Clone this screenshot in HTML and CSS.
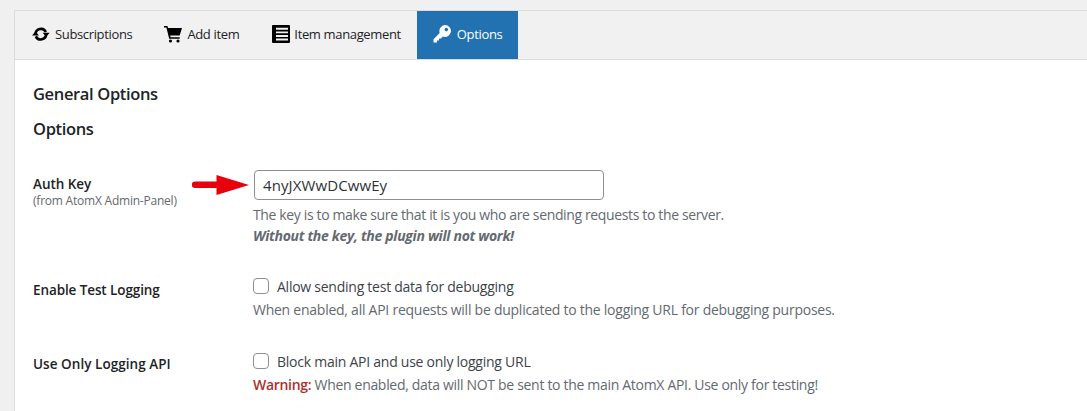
FILE: index.html

```html
<!DOCTYPE html>
<html lang="en">
<head>
    <meta charset="UTF-8">
    <title>Options</title>
    <link rel="stylesheet" href="styles.css">
</head>
<body>
    <div class="wrap">
        <nav class="tabs">
            <a class="tab tab-subs">
                <svg class="icon" width="18" height="16" viewBox="0 0.500 16.500 14.700"><path d="M3.200 8a5 5 0 0 1 9.500-2M13 8a5 5 0 0 1-9.500 2" fill="none" stroke="#000" stroke-width="2.400"/><path d="M9.800 6.800h6.400L13 10.400zM0 9.200h6.400L3.200 5.600z"/></svg>
                Subscriptions
            </a>
            <a class="tab tab-add">
                <svg class="icon" width="18" height="18" viewBox="0 0 18 18"><path d="M0 1h3.400l.7 2H18l-2.300 7.600H6.200l.4 1.600h9.100v1.600H5.200L2.400 2.600H0z"/><circle cx="6.500" cy="16" r="1.600"/><circle cx="14" cy="16" r="1.600"/></svg>
                Add item
            </a>
            <a class="tab tab-manage">
                <svg class="icon" width="18" height="18" viewBox="0 0 18 18"><path fill-rule="evenodd" d="M1 0h16a1 1 0 0 1 1 1v16a1 1 0 0 1-1 1H1a1 1 0 0 1-1-1V1a1 1 0 0 1 1-1zM4 2.800v1.900h12V2.800zM4 6.400v1.900h12V6.400zM4 10v1.900h12V10zM4 13.600v1.900h12v-1.900z"/></svg>
                Item management
            </a>
            <a class="tab tab-active">
                <svg class="icon" width="18" height="18" viewBox="0 0 18 18"><path fill-rule="evenodd" d="M12 0a6 6 0 1 1-2.200 11.600L8 13.500H6v2H4v2H0.500v-3.200l6.200-6.400A6 6 0 0 1 12 0zm1.300 2.800a1.800 1.800 0 1 0 0 3.600 1.800 1.800 0 0 0 0-3.600z"/></svg>
                Options
            </a>
        </nav>
        <div class="content">
            <h2 class="title-general">General Options</h2>
            <h2 class="title-options">Options</h2>

            <div class="row row-key">
                <div class="label">
                    <strong>Auth Key</strong>
                    <small>(from AtomX Admin-Panel)</small>
                    <svg class="arrow" width="58" height="24" viewBox="0 0 58 24"><path d="M3 8.500h21.500V2L57 12 24.500 22v-7H3a3.200 3.200 0 0 1 0-6.500z" fill="#e8000d"/></svg>
                </div>
                <div class="field">
                    <input class="key-input" type="text" value="4nyJXWwDCwwEy">
                    <p class="desc desc-first">The key is to make sure that it is you who are sending requests to the server.</p>
                    <p class="desc desc-em"><b><i>Without the key, the plugin will not work!</i></b></p>
                </div>
            </div>

            <div class="row row-test">
                <div class="label"><strong>Enable Test Logging</strong></div>
                <div class="field">
                    <label class="check"><span class="box"></span>Allow sending test data for debugging</label>
                    <p class="desc">When enabled, all API requests will be duplicated to the logging URL for debugging purposes.</p>
                </div>
            </div>

            <div class="row row-only">
                <div class="label"><strong>Use Only Logging API</strong></div>
                <div class="field">
                    <label class="check"><span class="box"></span>Block main API and use only logging URL</label>
                    <p class="desc desc-warn"><b class="warn">Warning:</b> When enabled, data will NOT be sent to the main AtomX API. Use only for testing!</p>
                </div>
            </div>
        </div>
    </div>
</body>
</html>
```

FILE: styles.css

```css
body {
    margin: 0;
    padding: 10px 0 0 14px;
    box-sizing: border-box;
    height: 411px;
    overflow: hidden;
    background-color: #f0f0f1;
    font-family: "Open Sans", "Noto Sans", sans-serif;
    font-size: 14px;
    letter-spacing: -0.25px;
    color: #3c434a;
}
.wrap {
    border: 1px solid #dcdcde;
    border-right: 0;
    border-bottom: 0;
    background-color: #fff;
    height: 401px;
}
.tabs {
    display: flex;
    height: 48px;
    padding-left: 1px;
    background-color: #f1f1f1;
    border-bottom: 1px solid #dcdcde;
}
.tab {
    display: flex;
    align-items: center;
    gap: 5px;
    height: 46px;
    padding: 0 16px 2px;
    font-size: 13px;
    letter-spacing: -0.35px;
    color: #1d2327;
}
.icon {
    flex: none;
    fill: #000;
}
.tab-manage {
    padding-left: 17px;
    gap: 4px;
}
.tab-active {
    box-sizing: border-box;
    height: 48px;
    gap: 6px;
    background-color: #2271b1;
    color: #fff;
}
.tab-active .icon {
    fill: #fff;
}
.content {
    padding: 0 18px;
}
h2 {
    margin: 0;
    font-size: 16.500px;
    font-weight: 600;
    letter-spacing: -0.35px;
    line-height: 22px;
    color: #1d2327;
}
.title-general {
    padding-top: 23px;
}
.title-options {
    padding-top: 13px;
}
.row {
    display: flex;
}
.row-key {
    padding-top: 30px;
}
.row-test {
    padding-top: 30px;
}
.row-only {
    padding-top: 31px;
}
.label {
    position: relative;
    width: 220px;
    flex: none;
    color: #1d2327;
}
.label strong {
    display: block;
    font-size: 13.500px;
    font-weight: 600;
    letter-spacing: -0.05px;
    line-height: 18px;
}
.label small {
    display: block;
    font-size: 12px;
    line-height: 16px;
    letter-spacing: -0.22px;
    color: #646970;
}
.row-key .label strong {
    padding-top: 5px;
}
.row-test .label strong {
    padding-top: 5px;
    letter-spacing: -0.1px;
}
.row-only .label strong {
    padding-top: 4px;
    letter-spacing: 0.05px;
}
.arrow {
    position: absolute;
    left: 159px;
    top: 3px;
}
.key-input {
    display: block;
    box-sizing: border-box;
    width: 350px;
    height: 30px;
    margin: 0 0 0 1px;
    padding: 0 8px;
    border: 1px solid #8c8f94;
    border-radius: 4px;
    font-family: inherit;
    font-size: 15px;
    letter-spacing: 0.1px;
    color: #2c3338;
}
.desc {
    margin: 0;
    line-height: 20px;
    color: #646970;
}
.desc-first {
    padding-top: 5px;
    letter-spacing: -0.36px;
}
.desc-em {
    padding-top: 1px;
    letter-spacing: -0.31px;
}
.desc-warn {
    letter-spacing: -0.31px;
}
.check {
    display: flex;
    align-items: center;
    gap: 8px;
    height: 20px;
    margin-bottom: 4px;
    color: #3c434a;
}
.box {
    box-sizing: border-box;
    width: 16px;
    height: 16px;
    background-color: #fff;
    border: 1px solid #8c8f94;
    border-radius: 4px;
}
.warn {
    font-weight: 600;
    color: #b32d2e;
}
```
